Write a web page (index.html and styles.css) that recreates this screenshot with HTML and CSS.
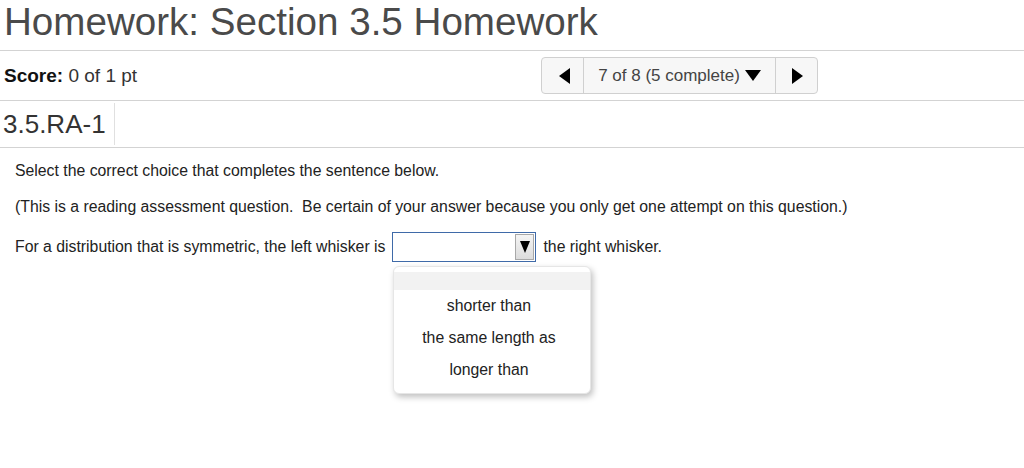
FILE: index.html
```html
<!DOCTYPE html>
<html lang="en">
  <head>
    <meta charset="UTF-8" />
    <meta name="viewport" content="width=device-width, initial-scale=1.0" />
    <title>Homework: Section 3.5 Homework</title>
    <link rel="stylesheet" href="styles.css">
  </head>
  <body>
    <h1 class="hw-title">Homework: Section 3.5 Homework</h1>

    <div class="score-bar">
      <div class="score"><b>Score:</b> 0 of 1 pt</div>
      <div class="nav">
        <button class="nav-btn nav-prev"><span class="tri tri-left"></span></button>
        <button class="nav-btn nav-mid">7 of 8 (5 complete)<span class="tri tri-down"></span></button>
        <button class="nav-btn nav-next"><span class="tri tri-right"></span></button>
      </div>
    </div>

    <div class="question-id">
      <span class="qid">3.5.RA-1</span>
    </div>

    <div class="question">
      <p>Select the correct choice that completes the sentence below.</p>
      <p>(This is a reading assessment question.&nbsp; Be certain of your answer because you only get one attempt on this question.)</p>
      <div class="answer-row">
        <span class="inline-text">For a distribution that is symmetric, the left whisker is</span>
        <div class="picker">
          <div class="select-box">
            <span class="select-arrow"><span class="tri tri-down-sm"></span></span>
          </div>
          <div class="choice-list">
            <div class="choice blank"></div>
            <div class="choice">shorter than</div>
            <div class="choice">the same length as</div>
            <div class="choice">longer than</div>
          </div>
        </div>
        <span class="inline-text">the right whisker.</span>
      </div>
    </div>
  </body>
</html>
```

FILE: styles.css
```css
body {
  margin: 0;
  font-family: "Liberation Sans", Arial, sans-serif;
  color: #000;
  background: #fff;
}

.hw-title {
  margin: 0;
  height: 50px;
  padding-left: 4px;
  font-size: 38.6px;
  font-weight: normal;
  line-height: 44px;
  color: #4a4a4a;
}

.score-bar {
  display: flex;
  align-items: center;
  height: 49px;
  border-top: 1px solid #d3d3d3;
  border-bottom: 1px solid #d3d3d3;
}

.score {
  width: 541px;
  padding-left: 4px;
  box-sizing: border-box;
  font-size: 19px;
  color: #333;
}

.score b {
  color: #111;
}

.nav {
  display: flex;
  height: 37px;
  border: 1px solid #d0d0d0;
  border-radius: 4px;
  background: #f7f7f7;
  box-sizing: border-box;
}

.nav-btn {
  display: flex;
  align-items: center;
  justify-content: center;
  border: none;
  background: transparent;
  padding: 0;
  font-family: inherit;
  font-size: 17px;
  color: #444;
}

.nav-prev,
.nav-next {
  width: 41px;
}

.nav-mid {
  width: 193px;
  border-left: 1px solid #d0d0d0;
  border-right: 1px solid #d0d0d0;
}

.tri {
  display: inline-block;
  width: 0;
  height: 0;
}

.tri-left {
  border-top: 8px solid transparent;
  border-bottom: 8px solid transparent;
  border-right: 11px solid #000;
  margin-left: 3px;
}

.tri-right {
  border-top: 8px solid transparent;
  border-bottom: 8px solid transparent;
  border-left: 11px solid #000;
  margin-left: 1px;
}

.tri-down {
  border-left: 8px solid transparent;
  border-right: 8px solid transparent;
  border-top: 11px solid #000;
  margin-left: 5px;
}

.question-id {
  height: 46px;
  display: flex;
  align-items: center;
  border-bottom: 1px solid #d3d3d3;
}

.qid {
  display: flex;
  align-items: center;
  height: 42px;
  width: 111px;
  padding-left: 3px;
  border-right: 1px solid #e0e0e0;
  font-size: 26px;
  color: #333;
}

.question {
  padding: 14px 15px 60px;
  font-size: 15.8px;
  color: #222;
}

.question p {
  margin: 0 0 18px;
  line-height: 18px;
}

/* the open list sits under the select box, so the row aligns to the top */
.answer-row {
  display: flex;
  align-items: flex-start;
  margin-top: -2px;
}

.inline-text {
  line-height: 30px;
}

.picker {
  display: flex;
  flex-direction: column;
  align-items: flex-start;
  gap: 4px;
  width: 144px;
  flex-shrink: 0;
  margin: 0 7px 0 7px;
}

.select-box {
  display: flex;
  justify-content: flex-end;
  align-items: flex-start;
  width: 144px;
  height: 30px;
  padding: 1px;
  box-sizing: border-box;
  border: 1px solid #3f6aa8;
  background: #fff;
}

.select-arrow {
  width: 17px;
  height: 24px;
  display: flex;
  align-items: center;
  justify-content: center;
  border: 1px solid #a8a8a8;
  background: linear-gradient(#f4f4f4, #dcdcdc);
}

.tri-down-sm {
  border-left: 5px solid transparent;
  border-right: 5px solid transparent;
  border-top: 12px solid #000;
}

.choice-list {
  flex-shrink: 0;
  width: 198px;
  margin-left: 1px;
  padding: 5px 7px 7px 0;
  box-sizing: border-box;
  border: 1px solid #e6e6e6;
  border-radius: 6px;
  background: #fff;
  box-shadow: 2px 3px 6px rgba(0, 0, 0, 0.25);
}

.choice {
  height: 32px;
  line-height: 32px;
  text-align: center;
  white-space: nowrap;
  color: #222;
}

.choice.blank {
  height: 18px;
  margin-right: -7px;
  background: #f2f2f2;
}
```
